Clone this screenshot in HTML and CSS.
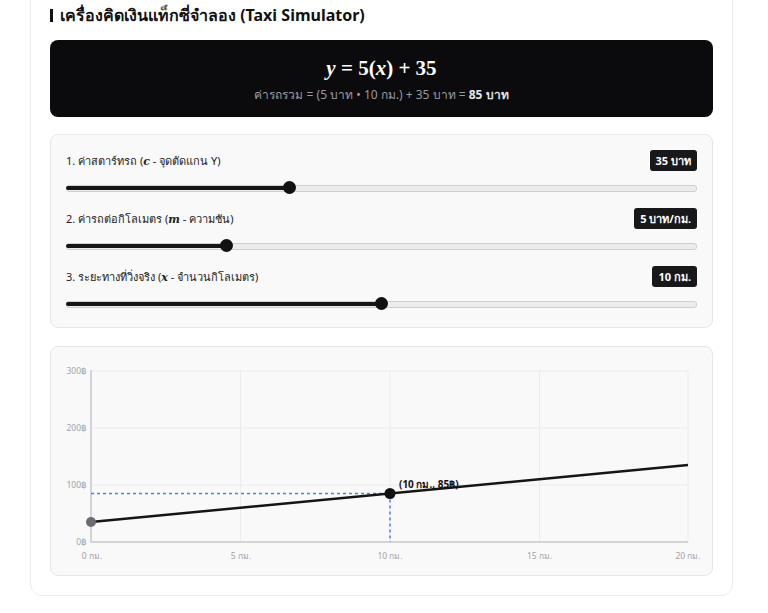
FILE: index.html
```html
<!DOCTYPE html>
<html>
	<head>
		<meta charset="UTF-8">
		<title>Taxi Simulator</title>
		<link rel="stylesheet" href="styles.css">
	</head>
	<body>
		<div class="card">
			<h2 class="title"><span class="title-bar"></span>เครื่องคิดเงินแท็กซี่จำลอง (Taxi Simulator)</h2>

			<div class="formula">
				<div class="formula-main"><i>y</i> = 5(<i>x</i>) + 35</div>
				<div class="formula-sub">ค่ารถรวม = (5 บาท • 10 กม.) + 35 บาท = <b>85 บาท</b></div>
			</div>

			<div class="controls">
				<div class="control">
					<div class="control-head">
						<span class="control-label">1. ค่าสตาร์ทรถ (<i class="math">c</i> - จุดตัดแกน Y)</span>
						<span class="badge">35 บาท</span>
					</div>
					<div class="slider">
						<div class="slider-fill" style="width: 35.4%"></div>
						<div class="slider-thumb" style="left: 35.4%"></div>
					</div>
				</div>
				<div class="control">
					<div class="control-head">
						<span class="control-label">2. ค่ารถต่อกิโลเมตร (<i class="math">m</i> - ความชัน)</span>
						<span class="badge">5 บาท/กม.</span>
					</div>
					<div class="slider">
						<div class="slider-fill" style="width: 25.4%"></div>
						<div class="slider-thumb" style="left: 25.4%"></div>
					</div>
				</div>
				<div class="control">
					<div class="control-head">
						<span class="control-label">3. ระยะทางที่วิ่งจริง (<i class="math">x</i> - จำนวนกิโลเมตร)</span>
						<span class="badge">10 กม.</span>
					</div>
					<div class="slider">
						<div class="slider-fill" style="width: 50%"></div>
						<div class="slider-thumb" style="left: 50%"></div>
					</div>
				</div>
			</div>

			<div class="chart">
				<svg width="661" height="228" viewBox="0 0 661 228">
					<!-- grid -->
					<g stroke="#ececec" stroke-width="1">
						<line x1="40" y1="138" x2="637" y2="138"/>
						<line x1="40" y1="81" x2="637" y2="81"/>
						<line x1="40" y1="24" x2="637" y2="24"/>
						<line x1="189.5" y1="24" x2="189.5" y2="195"/>
						<line x1="339" y1="24" x2="339" y2="195"/>
						<line x1="488.5" y1="24" x2="488.5" y2="195"/>
						<line x1="637" y1="24" x2="637" y2="195"/>
					</g>
					<!-- axes -->
					<g stroke="#d4d4d8" stroke-width="2">
						<line x1="40" y1="23" x2="40" y2="196"/>
						<line x1="39" y1="195" x2="637" y2="195"/>
					</g>
					<!-- y labels -->
					<g class="tick" text-anchor="end">
						<text x="36" y="27">300฿</text>
						<text x="36" y="84">200฿</text>
						<text x="36" y="141">100฿</text>
						<text x="36" y="198">0฿</text>
					</g>
					<!-- x labels -->
					<g class="tick" text-anchor="middle">
						<text x="41" y="212">0 กม.</text>
						<text x="190" y="212">5 กม.</text>
						<text x="339" y="212">10 กม.</text>
						<text x="488.5" y="212">15 กม.</text>
						<text x="637" y="212">20 กม.</text>
					</g>
					<!-- guides -->
					<g stroke="#4f7fe6" stroke-width="1.5" stroke-dasharray="3 3">
						<line x1="40" y1="146.5" x2="339" y2="146.5"/>
						<line x1="339" y1="146.5" x2="339" y2="195"/>
					</g>
					<!-- line -->
					<line x1="40" y1="175" x2="637" y2="118" stroke="#151515" stroke-width="2.5"/>
					<circle cx="40" cy="175" r="5" fill="#6b6b72"/>
					<circle cx="339" cy="146.5" r="5.5" fill="#111"/>
					<text class="point-label" x="348" y="141">(10 กม., 85฿)</text>
				</svg>
			</div>
		</div>
	</body>
</html>
```

FILE: styles.css
```css
* {margin: 0; padding: 0; box-sizing: border-box;}
body {
	background: #fff;
	font-family: "Noto Sans", "Open Sans", sans-serif;
	color: #222;
}
.card {
	width: 703px;
	margin: -18px 0 0 30px;
	padding: 20px 19px 19px;
	border: 1px solid #ececec;
	border-radius: 12px;
	background: #fff;
}
.title {
	display: flex;
	align-items: center;
	font-size: 16px;
	line-height: 24px;
	font-weight: 700;
	color: #111;
	margin-bottom: 13px;
}
.title-bar {
	display: inline-block;
	width: 3px;
	height: 13px;
	background: #111;
	margin-right: 7px;
}
.formula {
	background: #0b0b0d;
	border-radius: 8px;
	height: 77px;
	display: flex;
	flex-direction: column;
	align-items: center;
	justify-content: center;
	gap: 5px;
	color: #fff;
}
.formula-main {
	font-family: "Liberation Serif", "DejaVu Serif", serif;
	font-weight: 700;
	font-size: 21px;
	line-height: 24px;
	padding-top: 2px;
}
.formula-sub {
	font-size: 12px;
	color: #9a9aa0;
}
.formula-sub b {
	color: #e4e4e7;
}
.controls {
	margin-top: 17px;
	background: #f9f9f9;
	border: 1px solid #e6e6e6;
	border-radius: 8px;
	padding: 15px 15px 17px;
	display: flex;
	flex-direction: column;
	gap: 14px;
}
.control-head {
	display: flex;
	justify-content: space-between;
	align-items: center;
	height: 21px;
	margin-bottom: 10px;
}
.control-label {
	font-size: 11px;
	color: #222;
}
.math {
	font-family: "DejaVu Serif", serif;
	font-weight: 700;
}
.badge {
	background: #18181b;
	color: #fff;
	font-size: 11px;
	font-weight: 700;
	line-height: 21px;
	padding: 0 6px;
	border-radius: 3px;
}
.slider {
	position: relative;
	height: 13px;
	display: flex;
	align-items: center;
}
.slider::before {
	content: "";
	position: absolute;
	left: 0; right: 0;
	top: 4px;
	height: 5px;
	background: #ececec;
	border: 1px solid #cfcfcf;
	border-radius: 3px;
}
.slider-fill {
	position: relative;
	height: 4px;
	background: #151515;
	border-radius: 2px;
}
.slider-thumb {
	position: absolute;
	top: 0;
	width: 13px;
	height: 13px;
	margin-left: -6.5px;
	border-radius: 50%;
	background: #111;
}
.chart {
	margin-top: 18px;
	background: #f9f9f9;
	border: 1px solid #e6e6e6;
	border-radius: 8px;
	height: 230px;
}
.chart svg {
	display: block;
}
.tick {
	font-size: 8.5px;
	fill: #a1a1aa;
}
.point-label {
	font-size: 10px;
	font-weight: 700;
	fill: #111;
}
```
